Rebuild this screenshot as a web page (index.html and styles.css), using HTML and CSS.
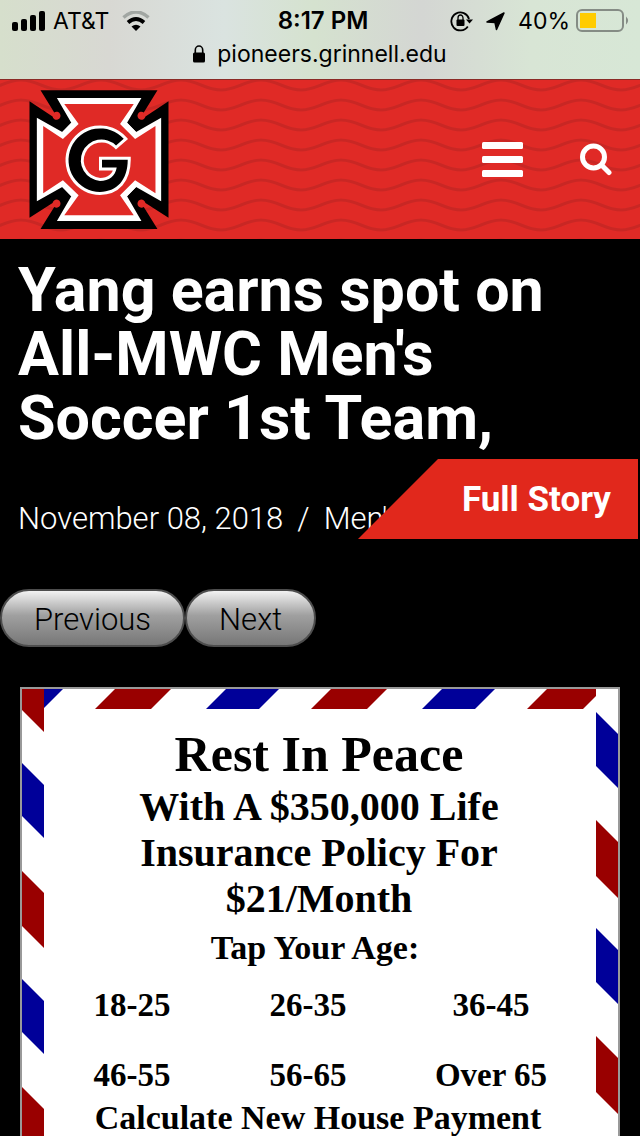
FILE: index.html
```
<!DOCTYPE html>
<html lang="en">
<head>
<meta charset="utf-8">
<meta name="viewport" content="width=device-width">
<title>Grinnell Pioneers</title>
<link rel="stylesheet" href="styles.css">
</head>
<body>
<div class="status">
  <div class="status-row">
    <div class="carrier">
      <svg width="34" height="20" viewBox="0 0 34 20" aria-label="Signal"><rect y="11" width="6" height="9" rx="2"/><rect x="9" y="8" width="6" height="12" rx="2"/><rect x="18" y="4" width="6" height="16" rx="2"/><rect x="27" width="6" height="20" rx="2"/></svg>
      <span>AT&amp;T</span>
      <svg class="wifi" width="28" height="20" viewBox="0 0 28 20" aria-label="Wi-Fi"><path d="M1.500 6.500Q14-4.500 26.500 6.500" fill="none" stroke="#a1a6a2" stroke-width="3.500"/><path d="M6 11.500Q14 4.500 22 11.500" fill="none" stroke="#000" stroke-width="3.800"/><path d="M9.500 15.500Q14 12 18.500 15.500L14 20Z"/></svg>
    </div>
    <time class="clock">8:17 PM</time>
    <div class="indicators">
      <svg width="24" height="22" viewBox="0 0 24 22" aria-label="Rotation lock"><path d="M17.800 16.500A9 9 0 1 1 19 9" fill="none" stroke="#000" stroke-width="1.800"/><path d="M16 9.500H23L19.500 13.500Z"/><rect x="6.500" y="9.500" width="8" height="6.500" rx="1"/><path d="M8 10V8a2.500 3 0 0 1 5 0v2" fill="none" stroke="#000" stroke-width="1.300"/></svg>
      <svg class="location" width="19" height="19" viewBox="0 0 19 19" aria-label="Location"><path d="M18 1L10.500 17.500 9 10.500 1 10Z" stroke="#000" stroke-width="1.500" stroke-linejoin="round"/></svg>
      <span>40%</span>
      <svg class="battery" width="54" height="24" viewBox="0 0 54 24" aria-label="Battery"><rect x="1" y="1" width="46" height="21" rx="5" fill="none" stroke="#858c85" stroke-width="2"/><rect x="4" y="4" width="16" height="15" fill="#fc0"/><path d="M50 7.500Q54 11.500 50 15.500Z" fill="#858c85"/></svg>
    </div>
  </div>
  <div class="address">
    <svg width="12" height="18" viewBox="0 0 12 18" aria-label="Secure"><rect y="7.500" width="12" height="10" rx="1.500"/><path d="M2.300 8V5a3.700 4 0 0 1 7.400 0v3" fill="none" stroke="#000" stroke-width="1.600"/></svg>
    <span>pioneers.grinnell.edu</span>
  </div>
</div>
<header class="site-header">
  <svg class="waves" width="100%" height="100%" aria-hidden="true"><defs><pattern id="wave" width="80" height="20" patternUnits="userSpaceOnUse"><g fill="none" stroke="#c92724" stroke-width="3"><path d="M-19 10C-3 10 5 0 21 0S45 10 61 10 85 0 101 0"/><path d="M-19 30C-3 30 5 20 21 20S45 30 61 30 85 20 101 20"/></g></pattern></defs><rect width="100%" height="100%" fill="url(#wave)"/></svg>
  <a class="logo" href="#" aria-label="Grinnell Pioneers home">
    <svg width="140" height="139" viewBox="88 40 418 416"><path d="M122 41H472L431 107A12 12 0 1 0 436 119L505 74V422L436 378A12 12 0 1 0 431 390L472 456H122L163 390A12 12 0 1 0 158 378L89 422V74L158 119A12 12 0 1 0 163 107Z"/><path fill="#fff" d="M171 64H424L381 138 408 166 483 123V373L408 330 381 358 424 432H171L214 358 187 330 111 373V123L187 166 214 138Z"/><path fill="#fff" d="M214 138L236 142 189 187 187 166ZM381 138L360 142 405 187 408 166ZM214 358L236 355 189 310 187 330ZM381 358L360 355 405 310 408 330Z"/><path fill="#e02a26" d="M193 82H401L360 142 405 187 466 148V349L405 310 360 355 401 415H193L236 355 189 310 130 349V148L189 187 236 142Z"/><path d="M371 186A95 95 0 1 0 300 345C350 345 383 310 383 249H306V272H350C346 298 327 312 300 312A62 62 0 1 1 348 206Z" stroke="#fff" stroke-width="18" paint-order="stroke"/></svg>
  </a>
  <nav class="tools">
    <button class="icon-button" aria-label="Menu"><svg width="42" height="35" viewBox="0 0 42 35" fill="#fff"><rect width="41" height="7" rx="1.500"/><rect y="14" width="41" height="7" rx="1.500"/><rect y="28" width="41" height="7" rx="1.500"/></svg></button>
    <button class="icon-button" aria-label="Search"><svg width="32" height="33" viewBox="0 0 32 33" fill="none" stroke="#fff"><circle cx="13.500" cy="14" r="11" stroke-width="5"/><path d="M21.500 22L29 29.500" stroke-width="5" stroke-linecap="round"/></svg></button>
  </nav>
</header>
<main>
  <article class="story">
    <h1>Yang earns spot on All-MWC Men's Soccer 1st Team,</h1>
    <p class="meta"><span>November 08, 2018</span><span>/</span><span>Men's</span></p>
    <a class="full-story" href="#">Full Story</a>
  </article>
  <div class="pager"><button>Previous</button><button>Next</button></div>
  <aside class="ad">
    <svg class="side" aria-hidden="true"><defs><pattern id="left" width="22" height="216" patternUnits="userSpaceOnUse"><path fill="#900" d="M0-34L22-12V43L0 21ZM0 182L22 204V259L0 237Z"/><path fill="#009" d="M0 74L22 96V149L0 127Z"/></pattern></defs><rect width="100%" height="100%" fill="url(#left)"/></svg>
    <div class="ad-body">
      <svg class="top" aria-hidden="true"><defs><pattern id="top" width="216" height="20" patternUnits="userSpaceOnUse"><path fill="#900" d="M51 20L71 0H127L107 20Z"/><path fill="#009" d="M162 20L182 0H235L215 20ZM-54 20L-34 0H19L-1 20Z"/></pattern></defs><rect width="100%" height="100%" fill="url(#top)"/></svg>
      <h2>Rest In Peace</h2>
      <p class="offer">With A $350,000 Life Insurance Policy For $21/Month</p>
      <p class="prompt">Tap Your Age:</p>
      <div class="ages"><a href="#">18-25</a><a href="#">26-35</a><a href="#">36-45</a><a href="#">46-55</a><a href="#">56-65</a><a href="#">Over 65</a></div>
      <a class="calculate" href="#">Calculate New House Payment</a>
    </div>
    <svg class="side" aria-hidden="true"><defs><pattern id="right" width="22" height="216" patternUnits="userSpaceOnUse"><path fill="#009" d="M0 23L22 45V99L0 77Z"/><path fill="#900" d="M0 131L22 153V209L0 187Z"/></pattern></defs><rect width="100%" height="100%" fill="url(#right)"/></svg>
  </aside>
</main>
</body>
</html>
```
FILE: styles.css
```
* { box-sizing: border-box; }
body {
  margin: 0;
  min-height: 100vh;
  display: flex;
  flex-direction: column;
  background: #000;
  color: #fff;
  font-family: Roboto, "Noto Sans", sans-serif;
}
h1, h2, p { margin: 0; }
a { color: inherit; text-decoration: none; }
button { font: inherit; cursor: pointer; }
svg { display: block; flex: none; }

.status {
  height: 80px;
  padding: 6px 12px 0;
  color: #000;
  border-bottom: 1px solid #8b2a26;
  background: linear-gradient(90deg, #d6dfcc 0%, #d8d8d3 17%, #dae3e0 35%, #d5e2cf 49%, #d4d6d3 66%, #d8e5d5 83%, #d7e7d6 100%);
  font-family: Inter, sans-serif;
  font-size: 23px;
  line-height: 30px;
}
.status-row {
  display: grid;
  grid-template-columns: 1fr auto 1fr;
  align-items: center;
}
.carrier, .indicators, .address { display: flex; align-items: center; }
.carrier { gap: 7px; }
.wifi { margin-left: 6px; }
.clock { font-size: 24px; font-weight: 600; padding-left: 6px; }
.indicators { justify-content: flex-end; gap: 6px; }
.indicators .location { margin: 0 7px 0 6px; }
.battery { margin-right: -2px; }
.address { justify-content: center; gap: 12px; padding-top: 3px; }

.site-header {
  position: relative;
  display: flex;
  align-items: center;
  justify-content: space-between;
  min-height: 159px;
  padding: 0 28px 0 29px;
  background: #e02a26;
}
.waves { position: absolute; inset: 0; }
.logo, .tools { position: relative; }
.tools { display: flex; align-items: center; gap: 56px; }
.icon-button { padding: 0; border: 0; background: none; }

main { flex: 1; display: flex; flex-direction: column; }
.story { position: relative; padding: 19px 18px 0; min-height: 350px; }
h1 { font-size: 61px; line-height: 64px; font-weight: 700; }
.meta {
  display: flex;
  gap: 14px;
  padding-top: 49px;
  font-size: 31px;
  line-height: 40px;
  font-weight: 300;
  white-space: nowrap;
}
.full-story {
  position: absolute;
  right: 2px;
  top: 220px;
  width: 280px;
  padding: 1px 27px 0 0;
  background: #e1281c;
  clip-path: polygon(80px 0, 100% 0, 100% 100%, 0 100%);
  font-size: 35px;
  line-height: 79px;
  font-weight: 700;
  text-align: right;
}

.pager { display: flex; }
.pager button {
  height: 58px;
  padding: 2px 32px 0;
  border: 2px solid #4d4d4d;
  border-radius: 29px;
  background: linear-gradient(#f2f2f2, #a0a0a0 45%, #777);
  color: #000;
  font-size: 31px;
  font-weight: 300;
}

.ad {
  flex: 1;
  display: grid;
  grid-template-columns: 22px minmax(0, 1fr) 22px;
  margin: 40px 20px 0;
  border: 2px solid #999;
  border-bottom: 0;
  background: #fff;
  color: #000;
  font-family: "Liberation Serif", serif;
  font-weight: 700;
  text-align: center;
}
.side { width: 22px; height: 100%; }
.top { width: 100%; height: 20px; }
h2 { padding: 16px 2px 0 0; font-size: 50px; line-height: 58px; }
.offer { max-width: 400px; margin: 0 auto; padding: 1px 2px 0 0; font-size: 40px; line-height: 46px; }
.prompt { padding: 6px 10px 0 0; font-size: 34px; line-height: 40px; }
.ages {
  display: grid;
  grid-template-columns: 176fr 176fr 190fr;
  padding: 2px 10px 0 0;
  font-size: 33px;
  line-height: 70px;
}
.calculate { display: block; margin-top: -10px; padding-right: 4px; font-size: 34px; line-height: 36px; }
```
